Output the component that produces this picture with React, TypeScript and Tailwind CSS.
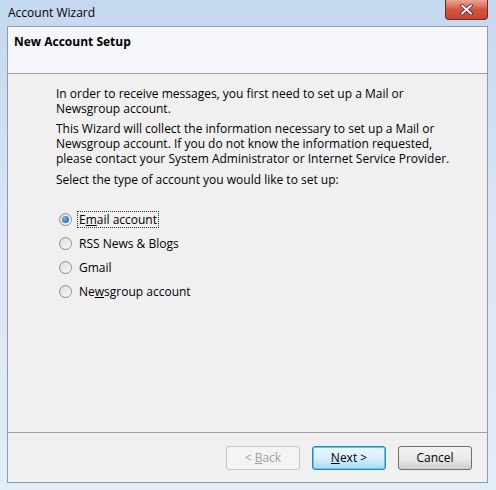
import React from "react"

const font = { fontFamily: '"Open Sans", "Noto Sans", sans-serif' }

function Radio({ checked }: { checked?: boolean }) {
  return (
    <span className="w-[13px] h-[13px] rounded-full border border-[#8e8f8f] bg-gradient-to-br from-[#d9d9d9] to-[#fbfbfb] flex items-center justify-center shrink-0">
      {checked && <span className="w-[7px] h-[7px] rounded-full bg-[radial-gradient(circle_at_35%_35%,#6fb8ee,#174f8a)]" />}
    </span>
  )
}

function Btn({ children, disabled, active }: { children: React.ReactNode; disabled?: boolean; active?: boolean }) {
  return (
    <div
      className={
        "w-[74px] h-[24px] rounded-[3px] border flex items-center justify-center text-[12px] " +
        (disabled
          ? "border-[#c5c5c5] bg-[#f4f4f4] text-[#a0a0a0]"
          : active
          ? "border-[#3c7fb1] bg-gradient-to-b from-[#eaf6fd] via-[#d9f0fc] to-[#a7d9f5] text-black shadow-[inset_0_0_0_1px_#48d0f9]"
          : "border-[#707070] bg-gradient-to-b from-[#f2f2f2] via-[#ebebeb] to-[#cfcfcf] text-black")
      }
    >
      {children}
    </div>
  )
}

const accounts = [
  { pre: "E", u: "m", post: "ail account", checked: true },
  { pre: "RSS News & Blogs", u: "", post: "" },
  { pre: "Gmail", u: "", post: "" },
  { pre: "Ne", u: "w", post: "sgroup account" },
]

export default function App() {
  return (
    <div style={font} className="w-[496px] h-[490px] bg-gradient-to-b from-[#c4d8ef] via-[#dbe7f5] to-[#e3edf8] flex flex-col text-black">
      <div className="h-[26px] flex items-start justify-between pl-[8px] pr-[8px]">
        <span className="text-[12px] mt-[4px] text-black">Account Wizard</span>
        <div className="w-[43px] h-[20px] rounded-b-[4px] border border-t-0 border-[#6d2b23] bg-gradient-to-b from-[#e8a698] via-[#d3553f] to-[#c74431] flex items-center justify-center">
          <svg width="13" height="11" viewBox="0 0 13 11">
            <path d="M2 1.5 L11 9.5 M11 1.5 L2 9.5" stroke="#3d2a2a" strokeWidth="3.6" strokeLinecap="round" />
            <path d="M2 1.5 L11 9.5 M11 1.5 L2 9.5" stroke="#f5f5f5" strokeWidth="2" strokeLinecap="round" />
          </svg>
        </div>
      </div>
      <div className="mx-[7px] mr-[8px] h-[457px] border border-[#8c9cb0] bg-[#f0f0f0] flex flex-col">
        <div className="h-[47px] bg-[#f6f7fc] border-b border-[#a0a0a0] pl-[6px] pt-[6px]">
          <div className="text-[12px] font-bold">New Account Setup</div>
        </div>
        <div className="flex-1 pl-[48px] pt-[12px] text-[12px] leading-[15px]">
          <p>In order to receive messages, you first need to set up a Mail or<br />Newsgroup account.</p>
          <p className="mt-[5px]">
            This Wizard will collect the information necessary to set up a Mail or
            <br />
            Newsgroup account. If you do not know the information requested,
            <br />
            please contact your System Administrator or Internet Service Provider.
          </p>
          <p className="mt-[6px]">Select the type of account you would like to set up:</p>
          <div className="mt-[25px] flex flex-col gap-[9px] pl-[3px]">
            {accounts.map((a, i) => (
              <div key={i} className="flex items-center gap-[6px] h-[15px]">
                <Radio checked={a.checked} />
                <span className={a.checked ? "outline outline-1 outline-dotted outline-[#333] px-[1px]" : "px-[1px]"}>
                  {a.pre}
                  {a.u && <span className="underline">{a.u}</span>}
                  {a.post}
                </span>
              </div>
            ))}
          </div>
        </div>
        <div className="h-[50px] border-t border-[#a0a0a0] flex items-start justify-end gap-[12px] pr-[15px] pt-[13px]">
          <Btn disabled>
            &lt; <span className="underline ml-[3px]">B</span>ack
          </Btn>
          <Btn active>
            <span className="underline">N</span>ext &gt;
          </Btn>
          <Btn>Cancel</Btn>
        </div>
      </div>
    </div>
  )
}
